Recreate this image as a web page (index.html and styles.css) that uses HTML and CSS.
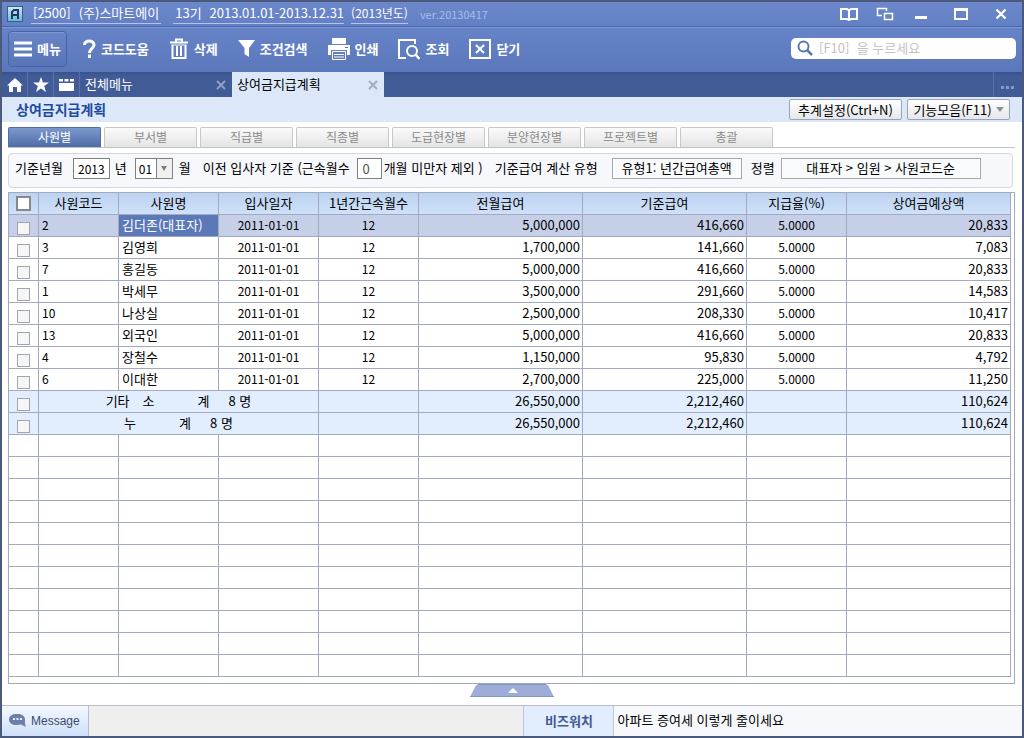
FILE: index.html
```html
<!DOCTYPE html>
<html lang="ko">
<head>
<meta charset="utf-8">
<title>상여금지급계획</title>
<link rel="stylesheet" href="styles.css">
</head>
<body>
<div class="window">
  <header class="titlebar">
    <svg class="app-logo" viewBox="0 0 16 16" aria-hidden="true">
      <defs><linearGradient id="logo-fill" x1="0" y1="0" x2="0" y2="1"><stop offset="0" stop-color="#d3eaf6"/><stop offset="1" stop-color="#68b4d8"/></linearGradient></defs>
      <rect x="0.5" y="0.5" width="15" height="15" fill="url(#logo-fill)" stroke="#34608f"/>
      <path d="M5 13V6L7 4H11V13M5 9H11" fill="none" stroke="#1d3a63" stroke-width="2"/>
    </svg>
    <span class="title-item company"><span>[2500]</span><span>(주)스마트에이</span></span>
    <span class="title-item period"><span>13기</span><span>2013.01.01-2013.12.31</span></span>
    <span class="title-item year">(2013년도)</span>
    <span class="version">ver.20130417</span>
    <div class="window-controls">
      <button type="button" aria-label="도움말"><svg width="18" height="14" viewBox="0 0 18 14"><path d="M1 2H7L9 3.5L11 2H17V12H11L9 13L7 12H1ZM9 3.5V13" fill="none" stroke="#fff" stroke-width="2"/></svg></button>
      <button type="button" aria-label="창 전환"><svg width="18" height="14" viewBox="0 0 18 14"><path d="M6 8.500H1.500V1.500H10.500V4M8.500 6.500H16.500V12.500H8.500Z" fill="none" stroke="#fff" stroke-width="1.500"/></svg></button>
      <button type="button" aria-label="최소화"><svg width="14" height="14" viewBox="0 0 14 14"><path d="M1 10.500H13" stroke="#fff" stroke-width="3"/></svg></button>
      <button type="button" class="maximize" aria-label="최대화"><svg width="14" height="12" viewBox="0 0 14 12"><path d="M1 0V11H13V0" fill="none" stroke="#fff" stroke-width="2"/><path d="M0 1.500H14" stroke="#fff" stroke-width="3"/></svg></button>
      <button type="button" aria-label="닫기"><svg width="12" height="12" viewBox="0 0 12 12"><path d="M1.500 1.500L10.500 10.500M10.500 1.500L1.500 10.500" stroke="#fff" stroke-width="2.200"/></svg></button>
    </div>
  </header>

  <div class="toolbar">
    <button type="button" class="tool menu-button"><svg width="18" height="16" viewBox="0 0 18 16"><path d="M0 2H18M0 8H18M0 14H18" stroke="#fff" stroke-width="3"/></svg>메뉴</button>
    <div class="tools">
      <button type="button" class="tool"><svg width="13" height="20" viewBox="0 0 13 20"><path d="M1.500 6C1.500 0.500 11 0.500 11 6C11 9.500 6.500 9.500 6.500 14" fill="none" stroke="#fff" stroke-width="3"/><rect x="5" y="15.500" width="3" height="3.500" fill="#fff"/></svg>코드도움</button>
      <button type="button" class="tool"><svg width="20" height="22" viewBox="0 0 20 22"><path d="M1 4.500H19M7 4V1.500H13V4" fill="none" stroke="#fff" stroke-width="2"/><path d="M3.500 7V20H16.500V7M8 8V18M12 8V18" fill="none" stroke="#fff" stroke-width="2"/><path d="M2.500 7H17.500" stroke="#fff" stroke-width="1"/></svg>삭제</button>
      <button type="button" class="tool"><svg width="17" height="20" viewBox="0 0 17 20"><path d="M0 1H17L11 9V18L6.500 15V9Z" fill="#fff"/></svg>조건검색</button>
      <button type="button" class="tool"><svg width="22" height="22" viewBox="0 0 22 22"><path d="M4 0H18V6H4ZM0 7H22V17H19V12H3V17H0Z" fill="#fff"/><path d="M4.500 13.500H17.500V21.500H4.500ZM6 16.500H16M6 19H16" fill="none" stroke="#fff"/><path d="M17 9.500H20" stroke="#5d79bd"/></svg>인쇄</button>
      <button type="button" class="tool"><svg width="22" height="22" viewBox="0 0 22 22"><path d="M8 20H1V2H17V6" fill="none" stroke="#fff" stroke-width="2"/><circle cx="14" cy="13" r="5" fill="none" stroke="#fff" stroke-width="2"/><path d="M17.500 16.500L21.500 21" stroke="#fff" stroke-width="2.500"/></svg>조회</button>
      <button type="button" class="tool"><svg width="22" height="22" viewBox="0 0 22 22"><path d="M1 2H21V20H1ZM7 7L15 15M15 7L7 15" fill="none" stroke="#fff" stroke-width="2"/></svg>닫기</button>
    </div>
    <label class="search">
      <svg width="16" height="16" viewBox="0 0 16 16" aria-hidden="true"><circle cx="6.500" cy="6.500" r="5" fill="none" stroke="#5878b4" stroke-width="2"/><path d="M10 10L15 15" stroke="#5878b4" stroke-width="2.500"/></svg>
      <input type="text" aria-label="검색" placeholder="[F10]  을 누르세요">
    </label>
  </div>

  <nav class="doc-tabs">
    <button type="button" class="quick" aria-label="홈"><svg width="16" height="14" viewBox="0 0 16 14"><path d="M8 0L16 7.500H14V14H10V9H6V14H2V7.500H0Z" fill="#fff"/></svg></button>
    <button type="button" class="quick" aria-label="즐겨찾기"><svg width="16" height="15" viewBox="0 0 16 15"><path d="M8 0L10 5.500H16L11.200 9L13 15L8 11.500L3 15L4.800 9L0 5.500H6Z" fill="#fff"/></svg></button>
    <button type="button" class="quick" aria-label="메뉴 모음"><svg width="15" height="13" viewBox="0 0 15 13"><path d="M0 1H4V3.500H0ZM5.500 1H9.500V3.500H5.500ZM11 1H15V3.500H11ZM0 5H15V13H0Z" fill="#fff"/></svg></button>
    <div class="doc-tab"><a href="#all">전체메뉴</a><button type="button" class="tab-close" aria-label="탭 닫기"><svg width="10" height="10" viewBox="0 0 10 10"><path d="M1 1L9 9M9 1L1 9" stroke="currentColor" stroke-width="2"/></svg></button></div>
    <div class="doc-tab current"><a href="#bonus">상여금지급계획</a><button type="button" class="tab-close" aria-label="탭 닫기"><svg width="10" height="10" viewBox="0 0 10 10"><path d="M1 1L9 9M9 1L1 9" stroke="currentColor" stroke-width="2"/></svg></button></div>
    <button type="button" class="more" aria-label="더보기"><svg width="14" height="3" viewBox="0 0 14 3"><path d="M0 0H3V3H0ZM5 0H8V3H5ZM10 0H13V3H10Z" fill="#8299ca"/></svg></button>
  </nav>

  <div class="page-head">
    <h1>상여금지급계획</h1>
    <button type="button" class="head-button">추계설정(Ctrl+N)</button>
    <button type="button" class="head-button">기능모음(F11)<svg width="8" height="5" viewBox="0 0 8 5"><path d="M0 0H8L4 5Z" fill="#8c939e"/></svg></button>
  </div>

  <main class="content">
    <div class="categories">
      <button type="button" class="category selected">사원별</button>
      <button type="button" class="category">부서별</button>
      <button type="button" class="category">직급별</button>
      <button type="button" class="category">직종별</button>
      <button type="button" class="category">도급현장별</button>
      <button type="button" class="category">분양현장별</button>
      <button type="button" class="category">프로젝트별</button>
      <button type="button" class="category">총괄</button>
    </div>

    <form class="filters">
      <div class="field">
        <label for="year">기준년월</label>
        <input id="year" class="year-input" type="text" value="2013">
        <label for="year">년</label>
        <span class="select-wrap">
          <select id="month"><option>01</option></select>
          <span class="select-arrow"><svg width="6" height="5" viewBox="0 0 6 5" aria-hidden="true"><path d="M0 0H6L3 5Z" fill="#7c7c7c"/></svg></span>
        </span>
        <label for="month">월</label>
      </div>
      <div class="field months-field">
        <label for="months">이전 입사자 기준 (근속월수</label>
        <input id="months" class="months-input" type="text" value="0">
        <label for="months">개월 미만자 제외 )</label>
      </div>
      <div class="field type-field">
        <label for="calc-type">기준급여 계산 유형</label>
        <button id="calc-type" type="button" class="picker type-picker">유형1: 년간급여총액</button>
      </div>
      <div class="field sort-field">
        <label for="sort">정렬</label>
        <button id="sort" type="button" class="picker sort-picker">대표자 &gt; 임원 &gt; 사원코드순</button>
      </div>
    </form>

    <div class="grid-panel">
      <table class="grid">
        <colgroup><col class="c-check"><col class="c-code"><col class="c-mid"><col class="c-mid"><col class="c-mid"><col><col><col class="c-mid"><col></colgroup>
        <thead>
          <tr><th><input type="checkbox" class="check-all" aria-label="전체 선택"></th><th>사원코드</th><th>사원명</th><th>입사일자</th><th>1년간근속월수</th><th>전월급여</th><th>기준급여</th><th>지급율(%)</th><th>상여금예상액</th></tr>
        </thead>
        <tbody>
          <tr class="active"><td><input type="checkbox" aria-label="선택 2"></td><td class="code">2</td><td class="name focused">김더존(대표자)</td><td>2011-01-01</td><td>12</td><td class="num">5,000,000</td><td class="num">416,660</td><td>5.0000</td><td class="num">20,833</td></tr>
          <tr><td><input type="checkbox" aria-label="선택 3"></td><td class="code">3</td><td class="name">김영희</td><td>2011-01-01</td><td>12</td><td class="num">1,700,000</td><td class="num">141,660</td><td>5.0000</td><td class="num">7,083</td></tr>
          <tr><td><input type="checkbox" aria-label="선택 7"></td><td class="code">7</td><td class="name">홍길동</td><td>2011-01-01</td><td>12</td><td class="num">5,000,000</td><td class="num">416,660</td><td>5.0000</td><td class="num">20,833</td></tr>
          <tr><td><input type="checkbox" aria-label="선택 1"></td><td class="code">1</td><td class="name">박세무</td><td>2011-01-01</td><td>12</td><td class="num">3,500,000</td><td class="num">291,660</td><td>5.0000</td><td class="num">14,583</td></tr>
          <tr><td><input type="checkbox" aria-label="선택 10"></td><td class="code">10</td><td class="name">나상실</td><td>2011-01-01</td><td>12</td><td class="num">2,500,000</td><td class="num">208,330</td><td>5.0000</td><td class="num">10,417</td></tr>
          <tr><td><input type="checkbox" aria-label="선택 13"></td><td class="code">13</td><td class="name">외국인</td><td>2011-01-01</td><td>12</td><td class="num">5,000,000</td><td class="num">416,660</td><td>5.0000</td><td class="num">20,833</td></tr>
          <tr><td><input type="checkbox" aria-label="선택 4"></td><td class="code">4</td><td class="name">장철수</td><td>2011-01-01</td><td>12</td><td class="num">1,150,000</td><td class="num">95,830</td><td>5.0000</td><td class="num">4,792</td></tr>
          <tr><td><input type="checkbox" aria-label="선택 6"></td><td class="code">6</td><td class="name">이대한</td><td>2011-01-01</td><td>12</td><td class="num">2,700,000</td><td class="num">225,000</td><td>5.0000</td><td class="num">11,250</td></tr>
          <tr class="sum"><td><input type="checkbox" aria-label="소계 선택"></td><td colspan="3" class="sum-label"><span class="sum-kind">기타</span><span>소</span><span class="sum-total">계</span><span class="sum-count">8 명</span></td><td></td><td class="num">26,550,000</td><td class="num">2,212,460</td><td></td><td class="num">110,624</td></tr>
          <tr class="sum"><td><input type="checkbox" aria-label="누계 선택"></td><td colspan="3" class="sum-label"><span>누</span><span class="sum-total">계</span><span class="sum-count">8 명</span></td><td></td><td class="num">26,550,000</td><td class="num">2,212,460</td><td></td><td class="num">110,624</td></tr>
          <tr><td></td><td></td><td></td><td></td><td></td><td></td><td></td><td></td><td></td></tr>
          <tr><td></td><td></td><td></td><td></td><td></td><td></td><td></td><td></td><td></td></tr>
          <tr><td></td><td></td><td></td><td></td><td></td><td></td><td></td><td></td><td></td></tr>
          <tr><td></td><td></td><td></td><td></td><td></td><td></td><td></td><td></td><td></td></tr>
          <tr><td></td><td></td><td></td><td></td><td></td><td></td><td></td><td></td><td></td></tr>
          <tr><td></td><td></td><td></td><td></td><td></td><td></td><td></td><td></td><td></td></tr>
          <tr><td></td><td></td><td></td><td></td><td></td><td></td><td></td><td></td><td></td></tr>
          <tr><td></td><td></td><td></td><td></td><td></td><td></td><td></td><td></td><td></td></tr>
          <tr><td></td><td></td><td></td><td></td><td></td><td></td><td></td><td></td><td></td></tr>
          <tr><td></td><td></td><td></td><td></td><td></td><td></td><td></td><td></td><td></td></tr>
          <tr><td></td><td></td><td></td><td></td><td></td><td></td><td></td><td></td><td></td></tr>
        </tbody>
      </table>
    </div>
    <button type="button" class="drawer-handle" aria-label="하단 열기"><svg width="84" height="13" viewBox="0 0 84 13"><path d="M0 13L5 3Q6.500 0 10 0H74Q77.500 0 79 3L84 13Z" fill="#9dadd8"/><path d="M0 12.500H84M8 0.500H76" stroke="#8796bf"/><path d="M38 9L43 4L48 9Z" fill="#fff"/></svg></button>
  </main>

  <footer class="statusbar">
    <button type="button" class="message"><svg width="17" height="14" viewBox="0 0 17 14"><path d="M8 0C13 0 16 2 16 5.500C16 7.500 15.500 9 17 13L12 10.500C5 12 0 10 0 5.500C0 2 3 0 8 0Z" fill="#6c7fa9"/><path d="M4 4H6V6H4ZM7.500 4H9.500V6H7.500ZM11 4H13V6H11Z" fill="#e6eefc"/></svg>Message</button>
    <div class="status-space"></div>
    <strong class="watch">비즈워치</strong>
    <a class="news" href="#news">아파트 증여세 이렇게 줄이세요</a>
  </footer>
</div>
</body>
</html>
```
FILE: styles.css
```css
* { box-sizing: border-box; }

body {
  margin: 0;
  font: 13px/20px "Noto Sans CJK KR", sans-serif;
  color: #000;
}

button, input, select { font: inherit; color: inherit; }
button { margin: 0; padding: 0; border: 0; background: none; white-space: nowrap; }
a { color: inherit; text-decoration: none; }
svg { display: block; flex: none; }

.window {
  display: flex;
  flex-direction: column;
  min-height: 100vh;
  border: 2px solid #4b5a7c;
  background: #fff;
}

/* Title bar */
.titlebar {
  display: flex;
  align-items: center;
  height: 25px;
  padding: 0 3px 0 5px;
  background: linear-gradient(#6c88cb, #6380c5);
  color: #fff;
  border-bottom: 1px solid #4967a9;
}
.app-logo { width: 16px; height: 16px; margin-right: 8px; }
.title-item {
  display: flex;
  gap: 8px;
  height: 20px;
  padding: 0 2px;
  border-bottom: 1px solid #b4c3e8;
  line-height: 18px;
  white-space: nowrap;
}
.company { margin-right: 12px; }
.period { margin-right: 7px; padding: 0 0 0 2px; }
.year { font-size: 12px; padding: 0; }
.version { margin-left: 12px; font-size: 11px; color: #a9bcea; }
.window-controls { display: flex; align-items: center; margin-left: auto; }
.window-controls button { display: flex; justify-content: center; width: 36px; }
.window-controls .maximize { width: 44px; }

/* Toolbar */
.toolbar {
  display: flex;
  align-items: center;
  height: 45px;
  padding: 0 6px 2px;
  border-top: 1px solid #7f99d6;
  background: linear-gradient(#6683c8, #5b78bb);
}
.tool {
  display: flex;
  align-items: center;
  gap: 5px;
  color: #fff;
  font-weight: 700;
}
.menu-button {
  height: 36px;
  padding: 0 5px;
  border: 1px solid #4664a7;
  border-radius: 4px;
  background: linear-gradient(#6a85c6, #5875b8);
  box-shadow: inset 0 1px #7e98d5;
}
.tools { display: flex; gap: 20px; margin-left: 16px; }
.search {
  display: flex;
  align-items: center;
  gap: 6px;
  width: 225px;
  height: 21px;
  margin: 0 0 2px auto;
  padding: 0 6px;
  border-radius: 5px;
  background: #fff;
}
.search input { flex: 1; min-width: 0; padding: 0; border: 0; outline: 0; background: none; }
.search input::placeholder { color: #c3c3c3; opacity: 1; white-space: pre; }

/* Document tabs */
.doc-tabs {
  display: flex;
  height: 25px;
  background: linear-gradient(#38528c, #415b97 4px);
  color: #fff;
}
.quick {
  display: flex;
  align-items: center;
  justify-content: center;
  width: 26px;
  border-right: 1px solid #5972a9;
}
.doc-tab {
  display: flex;
  align-items: center;
  justify-content: space-between;
  width: 152px;
  padding: 0 6px 0 5px;
  line-height: 18px;
}
.doc-tab a { padding-bottom: 2px; }
.doc-tab.current { background: #dce8fa; color: #000; }
.tab-close { color: #8f9fc8; }
.current .tab-close { color: #a3adbc; }
.more {
  display: flex;
  align-items: center;
  justify-content: center;
  width: 29px;
  margin-left: auto;
  padding-top: 6px;
  border-left: 1px solid #5972a9;
}

/* Page heading */
.page-head {
  display: flex;
  align-items: center;
  gap: 5px;
  height: 25px;
  padding: 0 12px 0 14px;
  background: #dce8fa;
}
.page-head h1 { margin: 0 auto 0 0; padding-bottom: 2px; font-size: 14px; line-height: 20px; color: #1f4b9c; }
.head-button {
  display: flex;
  align-items: center;
  justify-content: center;
  gap: 4px;
  width: 113px;
  height: 21px;
  border: 1px solid #9aa4b6;
  border-radius: 2px;
  background: linear-gradient(#fff, #e6e7ea);
  line-height: 18px;
}
.head-button + .head-button { width: 103px; }

/* Content */
.content { flex: 1; padding: 5px 7px 8px 6px; }

.categories { display: flex; gap: 3px; border-bottom: 1px solid #c3c3c3; }
.category {
  width: 93px;
  height: 20px;
  padding-bottom: 2px;
  border: 1px solid #c9c7c3;
  border-bottom: 0;
  border-radius: 2px 2px 0 0;
  background: linear-gradient(#fafafa, #e4e4e4);
  color: #8a8a8a;
  font-size: 12px;
  line-height: 16px;
}
.category.selected { border-color: #4e6da6; background: linear-gradient(#7c99cd, #4d6ca6); color: #fff; }

.filters {
  display: flex;
  align-items: center;
  height: 35px;
  margin: 5px 2px 4px 0;
  padding: 0 6px 4px;
  border: 1px solid #d3d8e4;
  border-radius: 4px;
  background: #f6f8fc;
  white-space: nowrap;
}
.field { display: flex; align-items: center; }
.field label { padding-bottom: 2px; }
.filters input, .filters select, .picker {
  height: 21px;
  padding: 0;
  border: 1px solid #808080;
  border-radius: 0;
  background: #fff;
  text-align: center;
}
.filters .year-input { width: 37px; margin: 0 5px 0 10px; font-size: 12px; }
.select-wrap { position: relative; margin: 0 6px 0 8px; }
.filters select {
  display: block;
  width: 38px;
  padding: 0 0 2px 3px;
  appearance: none;
  text-align: left;
  font-size: 12px;
}
.select-arrow {
  position: absolute;
  top: 1px;
  right: 1px;
  display: flex;
  align-items: center;
  justify-content: center;
  width: 16px;
  height: 19px;
  border-left: 1px solid #808080;
  background: #f0f0f0;
  pointer-events: none;
}
.months-field { margin-left: 12px; }
.filters .months-input { width: 25px; margin: 0 2px 0 7px; padding-right: 6px; color: #555; }
.type-field { margin-left: 12px; }
.filters .picker { padding-bottom: 2px; border-color: #a3a7ae; background: #fafbfd; line-height: 16px; }
.type-picker { width: 130px; margin-left: 14px; }
.sort-field { margin-left: 9px; }
.sort-picker { width: 200px; margin-left: 6px; }

/* Data grid */
.grid-panel { padding: 0 3px 6px 0; border: 1px solid #a2aabf; }
.grid { width: 100%; table-layout: fixed; border-collapse: separate; border-spacing: 0; }
.c-check { width: 30px; }
.c-code { width: 80px; }
.c-mid { width: 100px; }
.grid th, .grid td {
  height: 22px;
  padding: 0 0 2px;
  border-right: 1px solid #a2aabf;
  border-bottom: 1px solid #a2aabf;
  line-height: 18px;
  text-align: center;
  white-space: nowrap;
}
.grid th { background: linear-gradient(#bcd3f1, #cfe1f9); font-weight: 400; }
.grid td { font-size: 12px; }
.grid .name, .grid .sum-label, .grid .num { font-size: 13px; }
.grid .code { padding-left: 3px; text-align: left; }
.grid .name { padding-left: 3px; text-align: left; }
.grid .num { padding-right: 2px; text-align: right; }
.active td { background: #c6cfe8; }
.active .focused { background: #5b78b9; color: #fff; }
.sum td { background: #e2eefd; }
.sum-kind { margin-right: 13px; }
.sum-total { margin-left: 43px; }
.sum-count { margin-left: 19px; }
.grid input {
  display: block;
  width: 13px;
  height: 13px;
  margin: 6px auto 0;
  appearance: none;
  border: 1px solid #a0a5ae;
  background: #f6f6f6;
}
.grid td:first-child { padding-bottom: 0; }
.grid .check-all { width: 15px; height: 15px; margin-top: 2px; border: 2px solid #84888f; background: #fff; }

.drawer-handle { display: block; margin: 0 auto; }

/* Status bar */
.statusbar {
  display: flex;
  height: 31px;
  border-top: 1px solid #b9bdc9;
}
.message {
  display: flex;
  align-items: center;
  gap: 5px;
  width: 87px;
  padding-left: 7px;
  border-right: 1px solid #b3bed4;
  background: linear-gradient(#f4f8ff, #cfe0fa);
  color: #3a4a6c;
  font-family: "Liberation Sans", sans-serif;
  font-size: 12px;
}
.status-space { flex: 435; background: #efefef; }
.watch {
  display: flex;
  align-items: center;
  justify-content: center;
  width: 91px;
  border: solid #b6c8e6;
  border-width: 0 1px;
  background: #e2eefd;
  color: #3e5994;
}
.news {
  display: flex;
  align-items: center;
  flex: 405;
  padding: 0 0 2px 3px;
  background: #f6f8fc;
}
```
